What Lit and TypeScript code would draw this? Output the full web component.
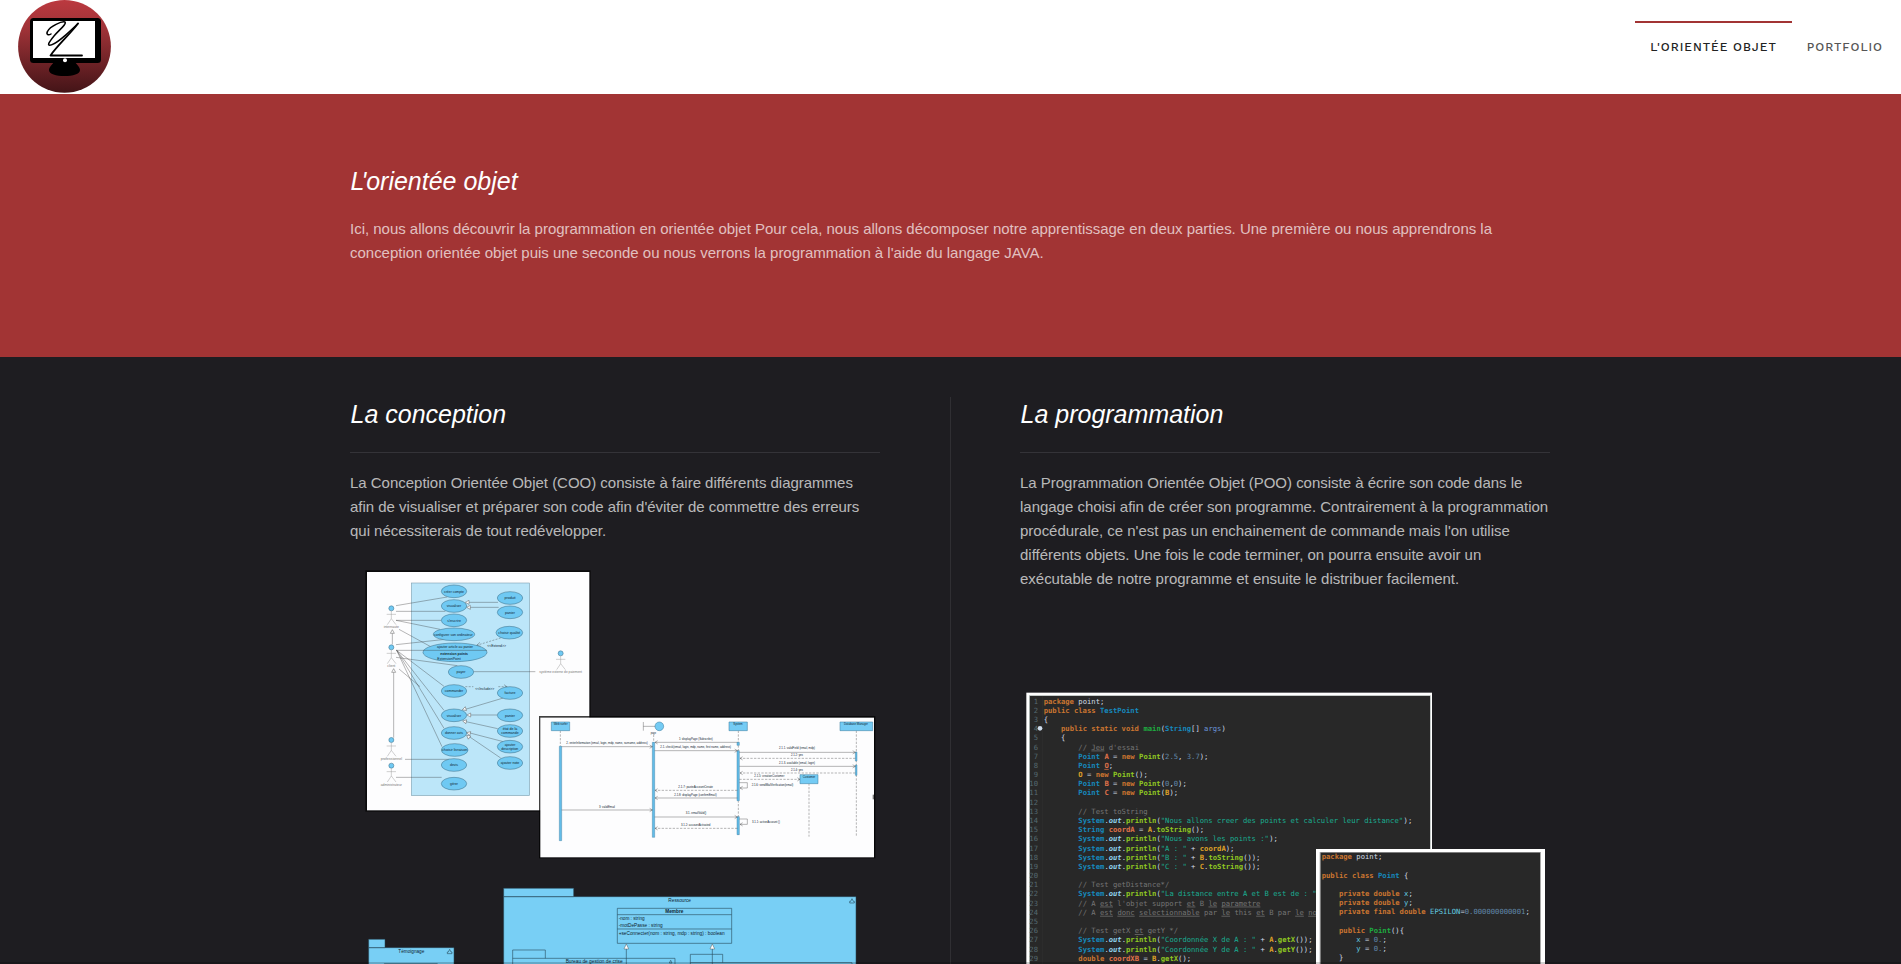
import { LitElement, html, svg, css } from "lit";
import { customElement } from "lit/decorators.js";

type Tok = [string, string];
type Line = [number, number, Tok[]]; // line number, column, tokens

const CH = 13.01;
const LH = 27.54;

function codeLines(lines: Line[], x0: number, y0: number, numbers: boolean) {
  return lines.map(([n, col, toks]) => {
    const y = y0 + (n - 1) * LH;
    let c = col;
    const spans = toks.map(([t, k]) => {
      const s = svg`<text class=${k} x=${x0 + c * CH} y=${y}>${t}</text>`;
      c += t.length;
      return s;
    });
    return svg`${numbers ? svg`<text class="ln" text-anchor="end" x="84" y=${y}>${n}</text>` : ""}${spans}`;
  });
}

const sys = (rest: Tok[]): Tok[] => [["System", "t"], [".", "p"], ["out", "o"], [".", "p"], ["println", "m"], ["(", "p"], ...rest];

const testPoint: Line[] = [
  [1, 0, [["package", "k"], [" point;", "p"]]],
  [2, 0, [["public class ", "k"], ["TestPoint", "t"]]],
  [3, 0, [["{", "p"]]],
  [4, 4, [["public static void ", "k"], ["main", "g"], ["(", "p"], ["String", "t"], ["[] ", "p"], ["args", "a"], [")", "p"]]],
  [5, 4, [["{", "p"]]],
  [6, 8, [["// ", "c"], ["Jeu", "c u"], [" d'essai", "c"]]],
  [7, 8, [["Point ", "t"], ["A", "v"], [" = ", "p"], ["new ", "k"], ["Point", "m"], ["(", "p"], ["2.5", "n"], [", ", "p"], ["3.7", "n"], [");", "p"]]],
  [8, 8, [["Point ", "t"], ["O", "v u"], [";", "p"]]],
  [9, 8, [["O", "y"], [" = ", "p"], ["new ", "k"], ["Point", "m"], ["();", "p"]]],
  [10, 8, [["Point ", "t"], ["B", "v"], [" = ", "p"], ["new ", "k"], ["Point", "m"], ["(", "p"], ["0", "n"], [",", "p"], ["0", "n"], [");", "p"]]],
  [11, 8, [["Point ", "t"], ["C", "v"], [" = ", "p"], ["new ", "k"], ["Point", "m"], ["(", "p"], ["B", "y"], [");", "p"]]],
  [12, 0, []],
  [13, 8, [["// Test toString", "c"]]],
  [14, 8, sys([['"Nous allons creer des points et calculer leur distance"', "s"], [");", "p"]])],
  [15, 8, [["String ", "t"], ["coordA", "v"], [" = ", "p"], ["A", "y"], [".", "p"], ["toString", "m"], ["();", "p"]]],
  [16, 8, sys([['"Nous avons les points :"', "s"], [");", "p"]])],
  [17, 8, sys([['"A : "', "s"], [" + ", "p"], ["coordA", "y"], [");", "p"]])],
  [18, 8, sys([['"B : "', "s"], [" + ", "p"], ["B", "y"], [".", "p"], ["toString", "m"], ["());", "p"]])],
  [19, 8, sys([['"C : "', "s"], [" + ", "p"], ["C", "y"], [".", "p"], ["toString", "m"], ["());", "p"]])],
  [20, 0, []],
  [21, 8, [["// Test getDistance*/", "c"]]],
  [22, 8, sys([['"La distance entre A et B est de : "', "s"]])],
  [23, 8, [["// A ", "c"], ["est", "c u"], [" l'objet support ", "c"], ["et", "c u"], [" B ", "c"], ["le", "c u"], [" ", "c"], ["parametre", "c u"]]],
  [24, 8, [["// A ", "c"], ["est", "c u"], [" ", "c"], ["donc", "c u"], [" ", "c"], ["selectionnable", "c u"], [" par ", "c"], ["le", "c u"], [" this ", "c"], ["et", "c u"], [" B par ", "c"], ["le", "c u"], [" ", "c"], ["no", "c u"]]],
  [25, 0, []],
  [26, 8, [["// Test getX ", "c"], ["et", "c u"], [" getY */", "c"]]],
  [27, 8, sys([['"Coordonnée X de A : "', "s"], [" + ", "p"], ["A", "y"], [".", "p"], ["getX", "m"], ["());", "p"]])],
  [28, 8, sys([['"Coordonnée Y de A : "', "s"], [" + ", "p"], ["A", "y"], [".", "p"], ["getY", "m"], ["());", "p"]])],
  [29, 8, [["double ", "k"], ["coordXB", "v"], [" = ", "p"], ["B", "y"], [".", "p"], ["getX", "m"], ["();", "p"]]],
];

const point: Line[] = [
  [1, 0, [["package", "k"], [" point;", "p"]]],
  [3, 0, [["public class ", "k"], ["Point", "t"], [" {", "p"]]],
  [5, 4, [["private double ", "k"], ["x", "f"], [";", "p"]]],
  [6, 4, [["private double ", "k"], ["y", "f"], [";", "p"]]],
  [7, 4, [["private final double ", "k"], ["EPSILON", "f"], ["=", "p"], ["0.000000000001", "n"], [";", "p"]]],
  [9, 4, [["public ", "k"], ["Point", "g"], ["(){", "p"]]],
  [10, 8, [["x", "f"], [" = ", "p"], ["0.", "n"], [";", "p"]]],
  [11, 8, [["y", "f"], [" = ", "p"], ["0.", "n"], [";", "p"]]],
  [12, 4, [["}", "p"]]],
];

// cx, cy, label, label width
const useCases: [number, number, string, number][] = [
  [282, 79, "créer compte", 60], [282, 123, "visualiser", 43], [282, 166, "s'inscrire", 41],
  [303, 321, "payer", 27], [282, 378, "commander", 55], [282, 451, "visualiser", 43],
  [282, 504, "donner avis", 54], [284, 555, "choisir livraison", 76], [282, 600, "devis", 24],
  [282, 656, "gérer", 24], [450, 99, "produit", 33], [450, 142, "panier", 30],
  [448, 203, "choisir qualité", 66], [450, 384, "facture", 33], [450, 451, "panier", 30],
  [450, 594, "ajouter note", 56],
];

const actors: [number, number, string, number][] = [
  [94, 130, "internaute", 46], [94, 247, "client", 24], [94, 525, "professionnel", 64],
  [94, 602, "administrateur", 64], [602, 265, "système externe de paiement", 128],
];

const links: string[] = [
  "M108 122L262 96", "M108 139H256", "M108 166H244", "M108 166L240 193", "M117 193L212 245",
  "M108 239L256 223", "M108 256H380", "M108 277L292 302", "M110 256L252 364", "M110 256L252 436",
  "M110 256L252 490", "M110 256L246 545", "M117 312L180 365", "M341 320H526", "M135 583H268", "M108 637H245",
  "M326 112H414", "M330 127H416", "M316 433L430 399", "M330 450H413", "M318 470L413 491",
  "M330 504L430 530", "M328 515L422 579", "M97 205V238", "M101 322V518",
];

const heads: [number, number, number][] = [
  [316, 112, 0], [320, 127, 0], [307, 434, -16], [321, 450, 0], [308, 468, 12], [320, 503, 14], [320, 511, 38],
  [97, 194, 90], [101, 311, 90],
];

// label, x, y, width
const seqLabels: [string, number, number, number][] = [
  ["2. enterInformation (email, login, mdp, name, surname, address)", 109, 103, 244],
  ["1: displayPage (Subscribe)", 447, 90, 101],
  ["2.1. check(email, login, mdp, name, first name, address)", 391, 115, 212],
  ["2.1.1. validField (email, mdp)", 747, 118, 108], ["2.1.2: yes", 783, 138, 36],
  ["2.1.3. available (email, login)", 747, 163, 108], ["2.1.4: yes", 783, 182, 36],
  ["2.1.5: creationCustomer", 673, 201, 90], ["2.1.6: sendMailVerification(email)", 665, 229, 125],
  ["2.1.7: pasteAccountCreate", 445, 234, 104], ["2.1.8: displayPage (confirmEmail)", 433, 257, 127],
  ["3: validEmail", 207, 293, 48], ["3.1. emailValid()", 467, 313, 62],
  ["3.1.1: activeAccount ()", 666, 338, 84], ["3.1.2: accountActivated", 453, 347, 88],
];

// x1, x2, y, dashed
const messages: [number, number, number, boolean][] = [
  [95, 367, 110, false], [622, 375, 97, false], [374, 622, 122, false], [628, 976, 127, false],
  [976, 630, 145, true], [628, 976, 169, false], [976, 630, 189, true], [628, 810, 208, true],
  [622, 375, 241, true], [622, 375, 264, false], [95, 367, 300, false], [374, 622, 321, false], [622, 375, 355, true],
];

const fit = (t: string, x: number, y: number, w: number, size: number, cls = "") =>
  svg`<text class=${cls} x=${x} y=${y} font-size=${size} textLength=${w} lengthAdjust="spacingAndGlyphs">${t}</text>`;

@customElement("site-logo")
class SiteLogo extends LitElement {
  static styles = css`:host{display:block;width:94px;height:94px}svg{display:block}`;
  render() {
    return html`<svg width="94" height="94" viewBox="18 0 94 94">
      <defs><linearGradient id="g" x1="0" y1="0" x2="0" y2="1">
        <stop offset="0" stop-color="#bb393f"/><stop offset=".3" stop-color="#a13338"/><stop offset="1" stop-color="#431417"/>
      </linearGradient></defs>
      <circle cx="64.5" cy="46.4" r="46.4" fill="url(#g)"/>
      <rect x="30" y="18" width="71" height="45" rx="3.5"/>
      <rect x="33" y="21" width="62" height="37" fill="#fff"/>
      <path d="M54 62H75C77 65 80 67 80 70C80 74 73 76 64.500 76C56 76 49 74 49 70C49 67 52 65 54 62Z"/>
      <circle cx="65" cy="60.200" r="2" fill="#fff"/>
      <g fill="none" stroke="#000" stroke-width="1.500" stroke-linecap="round" stroke-linejoin="round">
        <path d="M51 34C48 36 46 34 47.500 31.500C50 26 62 21 65 22C67 24 59 30 54 36C50 41 47 45 49.500 45.300C56 45 68 33 78 23.500"/>
        <path d="M78 23.500C71 33 56 47 50.500 55.500H82" stroke-width="1.800"/>
      </g>
    </svg>`;
  }
}

@customElement("uml-gallery")
class UmlGallery extends LitElement {
  static styles = css`
    :host{display:block}
    svg{display:block;font-family:"Liberation Sans",Arial,sans-serif}
    .ov{fill:#6fc9f3;stroke:#3e6f88;stroke-width:1.6}
    .ln{fill:none;stroke:#333;stroke-opacity:.72;stroke-width:1.5}
    .hd{fill:#fff;stroke:#555;stroke-width:1.4}
    .act{fill:none;stroke:#999;stroke-width:1.4}
    .bar{fill:#62bce8;stroke:#3c7c9e;stroke-width:1.2}
    .box{fill:#74cbf4;stroke:#3c7c9e;stroke-width:1.6}
    .pk{fill:#78cff5;stroke:#27495a;stroke-width:1.6}
    .none{fill:none;stroke:#27495a;stroke-width:1.8}
    text{fill:#0f2430}
    .grey{fill:#777}
    .b{font-weight:bold}
  `;
  useCase() {
    return svg`<g transform="translate(360 565) scale(.33333)">
      <rect x="16" y="16" width="676" height="724" fill="#000" opacity=".65"/>
      <rect x="21" y="21" width="667" height="715" fill="#fdfdfe"/>
      <rect x="154" y="54" width="355" height="638" fill="#bce6f9" stroke="#7d9fae" stroke-width="1.800"/>
      ${links.map((d) => svg`<path class="ln" d=${d}/>`)}
      <g class="ln" stroke-dasharray="6 4"><path d="M422 219L350 241"/><path d="M316 365H340M415 365H440"/></g>
      <path class="ln" d="M360 232L350 241L362 244M432 359L442 366L430 370"/>
      ${useCases.map(([x, y, t, w]) => svg`<ellipse class="ov" cx=${x} cy=${y} rx=${w > 60 ? 40 : 38} ry="19"/>${fit(t, x - w / 2, y + 4, w, 12)}`)}
      <ellipse class="ov" cx="282" cy="208" rx="62" ry="19"/>${fit("configurer son ordinateur", 222, 212, 116, 12)}
      <ellipse class="ov" cx="285" cy="262" rx="96" ry="28"/>
      <path class="ln" d="M190 256H380"/>
      ${fit("ajouter article au panier", 231, 249, 108, 12)}
      ${fit("extension points", 241, 271, 83, 12, "b")}
      ${fit("ExtensionPoint", 232, 284, 70, 12)}
      <ellipse class="ov" cx="450" cy="498" rx="38" ry="19"/>${fit("état de la", 428, 496, 44, 12)}${fit("commande", 424, 508, 52, 12)}
      <ellipse class="ov" cx="450" cy="545" rx="38" ry="19"/>${fit("ajouter", 434, 542, 32, 12)}${fit("description", 424, 555, 51, 12)}
      ${fit("<<Extend>>", 382, 247, 56, 12)}${fit("<<Include>>", 346, 376, 57, 12)}
      ${heads.map(([x, y, a]) => svg`<path class="hd" transform="translate(${x} ${y}) rotate(${a})" d="M0 0L11 -6V6Z"/>`)}
      ${actors.map(([x, y, t, w]) => svg`<circle class="ov" cx=${x} cy=${y} r="7.500"/><path class="act" d="M${x} ${y + 8}V${y + 31}M${x - 14} ${y + 18}H${x + 14}M${x} ${y + 31}L${x - 12} ${y + 49}M${x} ${y + 31}L${x + 14} ${y + 49}"/>${fit(t, x - w / 2, y + 60, w, 10, "grey")}`)}
    </g>`;
  }
  sequence() {
    return svg`<g transform="translate(530 710) scale(.33333)">
      <rect x="27" y="18" width="1009" height="427" fill="#000" opacity=".75"/>
      <rect x="31" y="23" width="1001" height="419" fill="#fdfdfe"/>
      <g class="ln" stroke-dasharray="7 4"><path d="M91 62V110M371 74V100M625 62V375M979 62V378M837 220V380"/></g>
      <path class="bar" d="M88 109h7v283h-7zM367 97h7v285h-7zM621 97h7v9h-7zM621 122h7v150h-7zM621 320h7v54h-7zM976 126h5v27h-5zM976 165h5v31h-5z"/>
      <path class="box" d="M64 36h55v26h-55zM597 36h55v26h-55zM930 36h98v26h-98zM810 194h54v27h-54z"/>
      <circle class="box" cx="388" cy="49" r="13"/><path class="ln" d="M340 36V62M340 49H375"/>
      ${fit("Web surfer", 71, 45, 42, 10)}${fit("System", 610, 45, 28, 10)}${fit("Database Manager", 942, 45, 72, 10)}${fit("Customer", 818, 203, 38, 10)}${fit("page", 362, 71, 16, 9)}
      ${messages.map(([a, b, y, d]) => {
        const s = a < b ? -1 : 1;
        return svg`<path class="ln" stroke-dasharray=${d ? "7 4" : "none"} d="M${a} ${y}H${b}"/><path class="ln" d="M${b + s * 8} ${y - 5}L${b} ${y}L${b + s * 8} ${y + 5}"/>`;
      })}
      <path class="ln" d="M628 218H652V234H630M638 229L630 234L638 239M628 327H652V343H630M638 338L630 343L638 348"/>
      ${seqLabels.map(([t, x, y, w]) => fit(t, x, y, w, 9.5))}
      <rect x="1028" y="254" width="4" height="14" fill="#777"/>
    </g>`;
  }
  packages() {
    return svg`<g transform="translate(360 880) scale(.33333)">
      <path class="pk" d="M26 178h49v25h-49zM26 203h256v80h-256zM431 25h210v25h-210zM431 50h1057v230h-1057z"/>
      <path class="none" d="M73 270V251H232V270M772 85h343v105h-343zM772 104H1115M772 147H1115M458 280V210H556V235M458 235H945V280M991 280V223H1088V248M991 248H1476V280M799 205V280M1057 205V280"/>
      <path class="hd" d="M799 192l7 15h-14zM1057 192l7 15h-14z"/>
      <path class="none" d="M269 208l4 8h3v5h-14v-5h3zM1476 56l4 8h3v5h-14v-5h3zM932 241l4 8h-8z"/>
      ${fit("Témoignage", 115, 218, 78, 14)}${fit("Ressource", 925, 66, 68, 14)}${fit("Membre", 916, 99, 54, 14, "b")}
      ${fit("-nom : string", 776, 121, 78, 14)}${fit("-motDePasse : string", 776, 141, 132, 14)}
      ${fit("+seConnecter(nom : string, mdp : string) : boolean", 776, 165, 318, 14)}
      ${fit("Bureau de gestion de crise", 617, 250, 171, 14)}
    </g>`;
  }
  render() {
    return html`<svg width="530" height="401" viewBox="350 563 530 401">${this.useCase()}${this.sequence()}${this.packages()}</svg>`;
  }
}

@customElement("code-gallery")
class CodeGallery extends LitElement {
  static styles = css`
    :host{display:block}
    svg{display:block}
    text{font:21.6px "DejaVu Sans Mono","Liberation Mono",monospace;white-space:pre}
    .ln{fill:#566a70}
    .k{fill:#cb7530;font-weight:bold}
    .p{fill:#d3dde6}
    .t{fill:#1689bd;font-weight:bold}
    .g{fill:#1eac40;font-weight:bold}
    .a{fill:#6a94d8}
    .c{fill:#757575}
    .u{text-decoration:underline;text-decoration-color:#9a6878}
    .v{fill:#e0724a;font-weight:bold}
    .y{fill:#dfa127;font-weight:bold}
    .m{fill:#8fc722;font-weight:bold}
    .n{fill:#6289aa}
    .s{fill:#19ae92}
    .o{fill:#8fd2ee;font-weight:bold;font-style:italic}
    .f{fill:#62cbe0}
  `;
  render() {
    return html`<svg width="530" height="353" viewBox="1020 611 530 353">
      <g transform="translate(1010 685) scale(.33333)">
        <rect x="49" y="23" width="1217" height="900" fill="#fff"/>
        <rect x="57" y="31" width="1205" height="900" fill="#a9b0ae"/>
        <rect x="60" y="33" width="1200" height="900" fill="#282828"/>
        <path d="M97 33V840" stroke="#303030" stroke-width="2"/>
        ${codeLines(testPoint, 101, 56, true)}
        <circle cx="90" cy="130" r="7" fill="#cfdcec"/>
      </g>
      <g transform="translate(1300 840) scale(.33333)">
        <rect x="48" y="27" width="687" height="400" fill="#fff"/>
        <rect x="59" y="36" width="664" height="400" fill="#a9a9a9"/>
        <rect x="62" y="38" width="658" height="400" fill="#282828"/>
        ${codeLines(point, 65, 58, false)}
      </g>
    </svg>`;
  }
}

@customElement("app-root")
class AppRoot extends LitElement {
  static styles = css`
    :host{display:block;height:100vh;overflow:hidden;position:relative;background:#1e1d21;font:15px/24px "Liberation Sans",Arial,sans-serif;color:rgba(255,255,255,.7)}
    .bar{display:flex;justify-content:space-between;height:94px;background:#fff;padding:0 3px 0 18px;box-sizing:border-box}
    .nav{display:flex;align-items:flex-start;padding-top:21px;font:500 12px/48px "Work Sans",Inter,sans-serif;letter-spacing:.95px;text-transform:uppercase}
    .link{border-top:2px solid transparent;padding:0 15px;color:#555;white-space:nowrap;height:48px;line-height:48px}
    .on{border-color:#a23434;color:#222}
    .hero{background:#a23434;height:263px;padding-top:70px;box-sizing:border-box}
    .wrap{width:1200px;margin:0 auto 0 350px}
    h2{margin:0;font-size:25px;line-height:34px;font-weight:400;font-style:italic;color:#fff;text-indent:.5px}
    .tight{letter-spacing:-3px}
    p{margin:0;letter-spacing:-.017px}
    .hero p{margin-top:19px}
    .cols{display:grid;grid-template-columns:530px 1px 530px;justify-content:space-between;padding-top:40px}
    .rule{background:#302f33;height:570px}
    .col h2{padding-bottom:21px;border-bottom:1px solid #343338;margin-bottom:18px}
    .pic{margin-top:20px}
    .edge{position:absolute;left:0;right:0;bottom:0;height:2px;background:rgba(0,0,0,.18)}
  `;
  render() {
    return html`
      <header class="bar">
        <site-logo></site-logo>
        <nav class="nav"><a class="link on">L'orientée objet</a><a class="link">Portfolio</a></nav>
      </header>
      <section class="hero"><div class="wrap">
        <h2><span class="tight">L</span>'orientée objet</h2>
        <p>Ici, nous allons découvrir la programmation en orientée objet Pour cela, nous allons décomposer notre apprentissage en deux parties. Une première ou nous apprendrons la conception orientée objet puis une seconde ou nous verrons la programmation à l'aide du langage JAVA.</p>
      </div></section>
      <section class="wrap cols">
        <div class="col">
          <h2>La conception</h2>
          <p>La Conception Orientée Objet (COO) consiste à faire différents diagrammes afin de visualiser et préparer son code afin d'éviter de commettre des erreurs qui nécessiterais de tout redévelopper.</p>
          <uml-gallery class="pic"></uml-gallery>
        </div>
        <div class="rule"></div>
        <div class="col">
          <h2>La programmation</h2>
          <p>La Programmation Orientée Objet (POO) consiste à écrire son code dans le langage choisi afin de créer son programme. Contrairement à la programmation procédurale, ce n'est pas un enchainement de commande mais l'on utilise différents objets. Une fois le code terminer, on pourra ensuite avoir un exécutable de notre programme et ensuite le distribuer facilement.</p>
          <code-gallery class="pic"></code-gallery>
        </div>
      </section>
      <div class="edge"></div>`;
  }
}
